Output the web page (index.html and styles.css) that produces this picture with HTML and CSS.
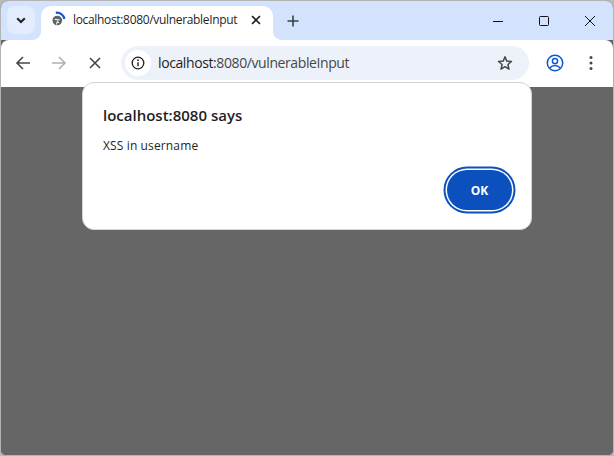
FILE: index.html
```html
<!DOCTYPE html>
<html lang="en">
<head>
<meta charset="utf-8">
<title>localhost:8080/vulnerableInput</title>
<link rel="stylesheet" href="styles.css">
</head>
<body>
<div class="window">
  <div class="tabstrip">
    <div class="tabsearch">
      <svg width="12" height="12" viewBox="0 0 12 12"><path d="M2.200 4.200 6 8l3.800-3.800" fill="none" stroke="#1f1f1f" stroke-width="2"/></svg>
    </div>
    <div class="tab">
      <svg class="favicon" width="16" height="16" viewBox="0 0 16 16">
        <circle cx="7.300" cy="9.500" r="4.800" fill="#5f6368"/>
        <path d="M4.800 8.700c1.200-.8 2.200-.2 2.800.4l1.800-.6M6.600 13.500l.6-2.600 1.900.4" fill="none" stroke="#fff" stroke-width="1.100"/>
        <path d="M5.800 1.800a7.500 7.500 0 0 1 8.600 6.200" fill="none" stroke="#0b57d0" stroke-width="2.200"/>
      </svg>
      <span class="tabtitle">localhost:8080/vulnerableInput</span>
      <svg class="tabclose" width="10" height="10" viewBox="0 0 10 10"><path d="M1 1l8 8M9 1 1 9" fill="none" stroke="#1f1f1f" stroke-width="1.600"/></svg>
    </div>
    <div class="newtab">
      <svg width="12" height="12" viewBox="0 0 12 12"><path d="M6 .5v11M.5 6h11" fill="none" stroke="#3c4043" stroke-width="1.600"/></svg>
    </div>
    <div class="spacer"></div>
    <div class="winctl">
      <svg width="12" height="12" viewBox="0 0 12 12"><path d="M1 6.500h10" stroke="#111" stroke-width="1" fill="none"/></svg>
    </div>
    <div class="winctl">
      <svg width="12" height="12" viewBox="0 0 12 12"><rect x="1.500" y="1.500" width="9" height="9" rx="1" fill="none" stroke="#111" stroke-width="1"/></svg>
    </div>
    <div class="winctl">
      <svg width="12" height="12" viewBox="0 0 12 12"><path d="M1 1l10 10M11 1 1 11" fill="none" stroke="#111" stroke-width="1"/></svg>
    </div>
  </div>
  <div class="toolbar">
    <div class="navbtn">
      <svg width="16" height="16" viewBox="0 0 16 16"><path d="M15 8H2M8 2 2 8l6 6" fill="none" stroke="#474747" stroke-width="1.600"/></svg>
    </div>
    <div class="navbtn">
      <svg width="16" height="16" viewBox="0 0 16 16"><path d="M1 8h13M8 2l6 6-6 6" fill="none" stroke="#b0b0b0" stroke-width="1.600"/></svg>
    </div>
    <div class="navbtn">
      <svg width="16" height="16" viewBox="0 0 16 16"><path d="M3 3l10 10M13 3 3 13" fill="none" stroke="#474747" stroke-width="1.600"/></svg>
    </div>
    <div class="omnibox">
      <div class="siteinfo">
        <svg width="14" height="14" viewBox="0 0 14 14"><circle cx="7" cy="7" r="5.800" fill="none" stroke="#1f1f1f" stroke-width="1.300"/><path d="M7 6.200v4" stroke="#1f1f1f" stroke-width="1.400" fill="none"/><circle cx="7" cy="4.200" r=".9" fill="#1f1f1f"/></svg>
      </div>
      <span class="url"><span class="host">localhost</span>:8080/vulnerableInput</span>
      <svg class="star" width="16" height="16" viewBox="0 0 16 16"><path d="M8 1.800l1.800 4.300 4.700.4-3.600 3 1.100 4.600L8 11.700l-4 2.400 1.100-4.600-3.600-3 4.700-.4z" fill="none" stroke="#474747" stroke-width="1.500" stroke-linejoin="round"/></svg>
    </div>
    <div class="profile">
      <svg width="18" height="18" viewBox="0 0 18 18"><circle cx="9" cy="9" r="7.700" fill="none" stroke="#0b57d0" stroke-width="1.500"/><circle cx="9" cy="7" r="2.600" fill="none" stroke="#0b57d0" stroke-width="1.500"/><path d="M3.800 14c1.500-1.900 3.200-2.500 5.200-2.500s3.700.6 5.200 2.500" fill="none" stroke="#0b57d0" stroke-width="1.500"/></svg>
    </div>
    <div class="menu">
      <svg width="4" height="16" viewBox="0 0 4 16"><circle cx="2" cy="2.500" r="1.500" fill="#474747"/><circle cx="2" cy="8" r="1.500" fill="#474747"/><circle cx="2" cy="13.500" r="1.500" fill="#474747"/></svg>
    </div>
  </div>
  <div class="content"></div>
</div>
<div class="dialog">
  <h1 class="dlgtitle">localhost:8080 says</h1>
  <p class="dlgmsg">XSS in username</p>
  <div class="dlgactions"><button class="okbtn">OK</button></div>
</div>
</body>
</html>
```
FILE: styles.css
```css
* { box-sizing: border-box; }
html, body { margin: 0; height: 100%; }
body {
  width: 614px;
  height: 456px;
  overflow: hidden;
  position: relative;
  background: #b9b9b9;
  font-family: "Open Sans", "Noto Sans", "Liberation Sans", sans-serif;
  color: #1f1f1f;
}
.window {
  height: 456px;
  border: 1px solid #b4b4b4;
  border-radius: 8px 8px 6px 6px;
  overflow: hidden;
  display: flex;
  flex-direction: column;
  background: #666;
}
.tabstrip {
  height: 39px;
  flex: none;
  display: flex;
  align-items: flex-start;
  background: #d3e3fd;
}
.tabsearch {
  width: 28px;
  height: 28px;
  margin: 5px 0 0 6px;
  border-radius: 8px;
  background: #e3ecfd;
  display: flex;
  align-items: center;
  justify-content: center;
}
.tab {
  position: relative;
  width: 232px;
  height: 34px;
  margin: 5px 0 0 6px;
  padding: 0 0 6px 9px;
  border-radius: 10px 10px 0 0;
  background: #fff;
  display: flex;
  align-items: center;
}
.tab::before, .tab::after {
  content: "";
  position: absolute;
  bottom: 0;
  width: 8px;
  height: 8px;
}
.tab::before { left: -8px; background: radial-gradient(circle at 0 0, transparent 7.500px, #fff 8px); }
.tab::after { right: -8px; background: radial-gradient(circle at 100% 0, transparent 7.500px, #fff 8px); }
.favicon { flex: none; margin-top: -2px; }
.tabtitle {
  margin-left: 7px;
  font-size: 12px;
  line-height: 16px;
  white-space: nowrap;
  flex: 1;
  letter-spacing: -.33px;
}
.tabclose { flex: none; margin-right: 12px; }
.newtab {
  width: 28px;
  height: 28px;
  margin: 6px 0 0 6px;
  display: flex;
  align-items: center;
  justify-content: center;
}
.spacer { flex: 1; }
.winctl {
  width: 46px;
  height: 39px;
  display: flex;
  align-items: center;
  justify-content: center;
}
.toolbar {
  height: 47px;
  flex: none;
  background: #fff;
  border-radius: 8px 8px 0 0;
  display: flex;
  align-items: center;
  padding: 0 0 1px 4px;
}
.navbtn {
  width: 36px;
  height: 36px;
  display: flex;
  align-items: center;
  justify-content: center;
}
.omnibox {
  width: 408px;
  height: 34px;
  margin-left: 8px;
  border-radius: 17px;
  background: #edf2fa;
  display: flex;
  align-items: center;
  padding: 0 16px 0 4px;
}
.siteinfo {
  width: 26px;
  height: 26px;
  border-radius: 50%;
  background: #fff;
  display: flex;
  align-items: center;
  justify-content: center;
  flex: none;
}
.url {
  margin-left: 7px;
  flex: 1;
  font-size: 14px;
  line-height: 20px;
  white-space: nowrap;
  color: #474747;
  letter-spacing: -.4px;
}
.host { color: #1f1f1f; }
.star { flex: none; }
.profile {
  width: 18px;
  height: 18px;
  margin-left: 17px;
  flex: none;
  display: flex;
}
.menu {
  margin-left: 25px;
  width: 4px;
  height: 16px;
  flex: none;
  display: flex;
}
.content { flex: 1; background: #666; }
.dialog {
  position: absolute;
  left: 82px;
  top: 82px;
  width: 450px;
  height: 148px;
  padding: 22px 19px 19px 20px;
  background: #fff;
  border: 1px solid #d4d4d4;
  border-radius: 12px;
  display: flex;
  flex-direction: column;
}
.dlgtitle {
  margin: 0;
  font-size: 15px;
  line-height: 20px;
  font-weight: 600;
  color: #1f1f1f;
}
.dlgmsg {
  margin: 12px 0 0;
  font-size: 12px;
  line-height: 18px;
  letter-spacing: .13px;
  color: #1f1f1f;
}
.dlgactions {
  margin-top: auto;
  display: flex;
  justify-content: flex-end;
}
.okbtn {
  width: 65px;
  height: 40px;
  padding: 0;
  border: 0;
  border-radius: 20px;
  box-shadow: 0 0 0 1.5px #fff, 0 0 0 3.5px #0b50bd;
  background: #0b50bd;
  color: #fff;
  font: 700 12px "Open Sans", "Noto Sans", sans-serif;
}
```
